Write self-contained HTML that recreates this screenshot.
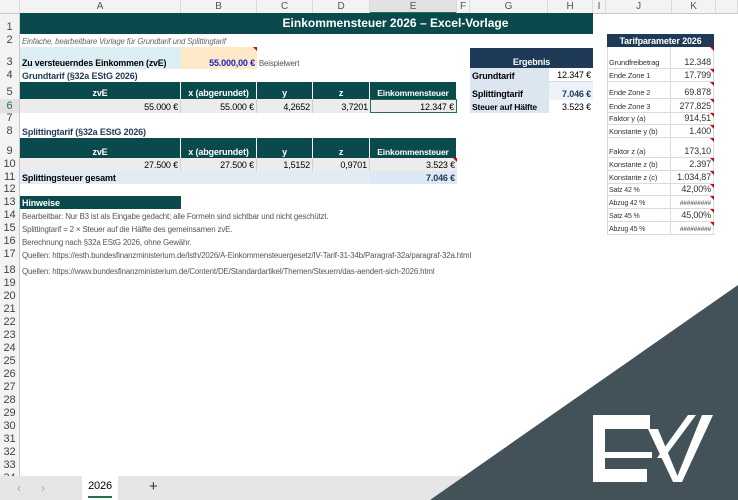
<!DOCTYPE html>
<html><head><meta charset="utf-8">
<style>
*{margin:0;padding:0;box-sizing:border-box}
body{width:738px;height:500px;overflow:hidden;background:#fff;font-family:"Liberation Sans",Arial,sans-serif;font-size:9px;color:#000;position:relative;letter-spacing:-0.15px}
.a{position:absolute;display:flex;align-items:flex-end;padding:0 2px 1px;white-space:nowrap;overflow:hidden}
.r{justify-content:flex-end}
.c{justify-content:center}
.hdr{position:absolute;top:0;height:14px;background:#f3f3f3;border-right:1px solid #dadada;border-bottom:1px solid #c8c8c8;color:#555;font-size:10px;text-align:center;line-height:14px}
.rn{position:absolute;left:0;width:20px;background:#f3f3f3;border-right:1px solid #c8c8c8;color:#444;font-size:11px;text-align:center;display:flex;align-items:flex-end;justify-content:center;line-height:13px}
.th{background:#0b4a4c;color:#fff;font-weight:bold;border-right:1px solid #fff}
.b{font-weight:bold}
.g{color:#555}
.n{color:#555;font-size:7.9px}
.tri{position:absolute;width:0;height:0;border-top:4px solid #d00;border-left:4px solid transparent}
.p{border-bottom:1px solid #d4dde6;border-right:1px solid #d4dde6;color:#333}
</style></head><body>
<div class="hdr" style="left:0;width:20px"></div>
<div class="hdr" style="left:20px;width:161px">A</div><div class="hdr" style="left:181px;width:76px">B</div><div class="hdr" style="left:257px;width:56px">C</div><div class="hdr" style="left:313px;width:57px">D</div><div class="hdr" style="left:370px;width:87px;background:#e2e2e2;border-bottom:2px solid #217346">E</div><div class="hdr" style="left:457px;width:13px">F</div><div class="hdr" style="left:470px;width:78px">G</div><div class="hdr" style="left:548px;width:45px">H</div><div class="hdr" style="left:593px;width:13px">I</div><div class="hdr" style="left:606px;width:66px">J</div><div class="hdr" style="left:672px;width:44px">K</div><div class="hdr" style="left:716px;width:22px"></div>
<div class="rn" style="top:14px;height:462px"></div>
<div class="rn" style="top:14px;height:20px">1</div><div class="rn" style="top:34px;height:13px">2</div><div class="rn" style="top:47px;height:22px">3</div><div class="rn" style="top:69px;height:13px">4</div><div class="rn" style="top:82px;height:17px">5</div><div class="rn" style="top:99px;height:14px;background:#e2e2e2;color:#217346">6</div><div class="rn" style="top:113px;height:12px">7</div><div class="rn" style="top:125px;height:13px">8</div><div class="rn" style="top:138px;height:20px">9</div><div class="rn" style="top:158px;height:13px">10</div><div class="rn" style="top:171px;height:13px">11</div><div class="rn" style="top:184px;height:12px">12</div><div class="rn" style="top:196px;height:13px">13</div><div class="rn" style="top:209px;height:13px">14</div><div class="rn" style="top:222px;height:13px">15</div><div class="rn" style="top:235px;height:13px">16</div><div class="rn" style="top:248px;height:13px">17</div><div class="rn" style="top:261px;height:16px">18</div><div class="rn" style="top:277px;height:13px">19</div><div class="rn" style="top:290px;height:13px">20</div><div class="rn" style="top:303px;height:13px">21</div><div class="rn" style="top:316px;height:13px">22</div><div class="rn" style="top:329px;height:13px">23</div><div class="rn" style="top:342px;height:13px">24</div><div class="rn" style="top:355px;height:13px">25</div><div class="rn" style="top:368px;height:13px">26</div><div class="rn" style="top:381px;height:13px">27</div><div class="rn" style="top:394px;height:13px">28</div><div class="rn" style="top:407px;height:13px">29</div><div class="rn" style="top:420px;height:13px">30</div><div class="rn" style="top:433px;height:13px">31</div><div class="rn" style="top:446px;height:13px">32</div><div class="rn" style="top:459px;height:13px">33</div><div class="rn" style="top:472px;height:13px">34</div>

<div class="a c" style="left:20px;top:13px;width:573px;height:21px;background:#0b4a4c;color:#fff;font-weight:bold;font-size:12px;align-items:center;padding-left:180px;letter-spacing:0">Einkommensteuer 2026 – Excel-Vorlage</div>
<div class="a" style="left:20px;top:34px;width:300px;height:13px;font-style:italic;color:#666;font-size:7.8px">Einfache, bearbeitbare Vorlage für Grundtarif und Splittingtarif</div>
<div class="a b" style="left:20px;top:47px;width:161px;height:22px;background:#daeef3;font-size:8.8px">Zu versteuerndes Einkommen (zvE)</div>
<div class="a r b" style="left:181px;top:47px;width:76px;height:22px;background:#fde9c8;color:#2020c0">55.000,00 €</div>
<div class="tri" style="left:253px;top:47px"></div>
<div class="a g" style="left:257px;top:47px;width:60px;height:22px;font-size:7.8px">Beispielwert</div>
<div class="a b" style="left:20px;top:69px;width:200px;height:13px;color:#1f3a56">Grundtarif (§32a EStG 2026)</div>
<div class="a c th" style="left:20px;top:82px;width:161px;height:17px">zvE</div>
<div class="a c th" style="left:181px;top:82px;width:76px;height:17px">x (abgerundet)</div>
<div class="a c th" style="left:257px;top:82px;width:56px;height:17px">y</div>
<div class="a c th" style="left:313px;top:82px;width:57px;height:17px">z</div>
<div class="a c th" style="left:370px;top:82px;width:87px;height:17px;font-size:8.5px">Einkommensteuer</div>
<div class="a r" style="left:20px;top:99px;width:161px;height:14px;background:#ececec;border-right:1px solid #d0d0d0">55.000 €</div>
<div class="a r" style="left:181px;top:99px;width:76px;height:14px;background:#ececec;border-right:1px solid #d0d0d0">55.000 €</div>
<div class="a r" style="left:257px;top:99px;width:56px;height:14px;background:#ececec;border-right:1px solid #d0d0d0">4,2652</div>
<div class="a r" style="left:313px;top:99px;width:57px;height:14px;background:#ececec">3,7201</div>
<div class="a r" style="left:370px;top:99px;width:87px;height:14px;background:#ececec;border:1px solid #217346;padding-bottom:0">12.347 €</div>
<div class="a b" style="left:20px;top:125px;width:200px;height:13px;color:#1f3a56">Splittingtarif (§32a EStG 2026)</div>
<div class="a c th" style="left:20px;top:138px;width:161px;height:20px">zvE</div>
<div class="a c th" style="left:181px;top:138px;width:76px;height:20px">x (abgerundet)</div>
<div class="a c th" style="left:257px;top:138px;width:56px;height:20px">y</div>
<div class="a c th" style="left:313px;top:138px;width:57px;height:20px">z</div>
<div class="a c th" style="left:370px;top:138px;width:87px;height:20px;font-size:8.5px">Einkommensteuer</div>
<div class="a r" style="left:20px;top:158px;width:161px;height:13px;background:#ececec;border-right:1px solid #d0d0d0">27.500 €</div>
<div class="a r" style="left:181px;top:158px;width:76px;height:13px;background:#ececec;border-right:1px solid #d0d0d0">27.500 €</div>
<div class="a r" style="left:257px;top:158px;width:56px;height:13px;background:#ececec;border-right:1px solid #d0d0d0">1,5152</div>
<div class="a r" style="left:313px;top:158px;width:57px;height:13px;background:#ececec;border-right:1px solid #d0d0d0">0,9701</div>
<div class="a r" style="left:370px;top:158px;width:87px;height:13px;background:#ececec">3.523 €</div>
<div class="tri" style="left:453px;top:158px"></div>
<div class="a b" style="left:20px;top:171px;width:350px;height:13px;background:#e3ebf3">Splittingsteuer gesamt</div>
<div class="a r b" style="left:370px;top:171px;width:87px;height:13px;background:#dce8f4;color:#1f3a56">7.046 €</div>
<div class="a b" style="left:20px;top:196px;width:161px;height:13px;background:#0b4a4c;color:#fff">Hinweise</div>
<div class="a n" style="left:20px;top:209px;width:460px;height:13px">Bearbeitbar: Nur B3 ist als Eingabe gedacht; alle Formeln sind sichtbar und nicht geschützt.</div>
<div class="a n" style="left:20px;top:222px;width:460px;height:13px">Splittingtarif = 2 × Steuer auf die Hälfte des gemeinsamen zvE.</div>
<div class="a n" style="left:20px;top:235px;width:460px;height:13px">Berechnung nach §32a EStG 2026, ohne Gewähr.</div>
<div class="a n" style="left:20px;top:248px;width:520px;height:13px">Quellen: https://esth.bundesfinanzministerium.de/lsth/2026/A-Einkommensteuergesetz/IV-Tarif-31-34b/Paragraf-32a/paragraf-32a.html</div>
<div class="a n" style="left:20px;top:261px;width:520px;height:16px">Quellen: https://www.bundesfinanzministerium.de/Content/DE/Standardartikel/Themen/Steuern/das-aendert-sich-2026.html</div>
<div class="a c b" style="left:470px;top:48px;width:123px;height:20px;background:#1f3a56;color:#fff">Ergebnis</div>
<div class="a b" style="left:470px;top:68px;width:79px;height:14px;background:#dce6f1">Grundtarif</div>
<div class="a r" style="left:549px;top:68px;width:44px;height:14px;border-bottom:1px solid #d4dde6">12.347 €</div>
<div class="a b" style="left:470px;top:82px;width:79px;height:18px;background:#dce6f1">Splittingtarif</div>
<div class="a r b" style="left:549px;top:82px;width:44px;height:18px;background:#eef3f9;color:#1f3a56">7.046 €</div>
<div class="a b" style="left:470px;top:100px;width:79px;height:13px;background:#dce6f1;font-size:8.5px">Steuer auf Hälfte</div>
<div class="a r" style="left:549px;top:100px;width:44px;height:13px">3.523 €</div>
<div class="a c b" style="left:607px;top:34px;width:107px;height:13px;background:#1f3a56;color:#fff">Tarifparameter 2026</div>
<div style="position:absolute;left:607px;top:47px;width:107px;height:188px;border-left:1px solid #d4dde6"></div>
<div class="a p" style="left:607px;top:47px;width:64px;height:22px;font-size:7.5px">Grundfreibetrag</div><div class="a r p g" style="left:671px;top:47px;width:43px;height:22px">12.348</div>
<div class="a p" style="left:607px;top:69px;width:64px;height:13px;font-size:7.5px">Ende Zone 1</div><div class="a r p g" style="left:671px;top:69px;width:43px;height:13px">17.799</div>
<div class="a p" style="left:607px;top:82px;width:64px;height:17px;font-size:7.5px">Ende Zone 2</div><div class="a r p g" style="left:671px;top:82px;width:43px;height:17px">69.878</div>
<div class="a p" style="left:607px;top:99px;width:64px;height:14px;font-size:7.5px">Ende Zone 3</div><div class="a r p g" style="left:671px;top:99px;width:43px;height:14px">277.825</div>
<div class="a p" style="left:607px;top:113px;width:64px;height:12px;font-size:7.5px">Faktor y (a)</div><div class="a r p g" style="left:671px;top:113px;width:43px;height:12px">914,51</div>
<div class="a p" style="left:607px;top:125px;width:64px;height:13px;font-size:7.5px">Konstante y (b)</div><div class="a r p g" style="left:671px;top:125px;width:43px;height:13px">1.400</div>
<div class="a p" style="left:607px;top:138px;width:64px;height:20px;font-size:7.5px">Faktor z (a)</div><div class="a r p g" style="left:671px;top:138px;width:43px;height:20px">173,10</div>
<div class="a p" style="left:607px;top:158px;width:64px;height:13px;font-size:7.5px">Konstante z (b)</div><div class="a r p g" style="left:671px;top:158px;width:43px;height:13px">2.397</div>
<div class="a p" style="left:607px;top:171px;width:64px;height:13px;font-size:7.5px">Konstante z (c)</div><div class="a r p g" style="left:671px;top:171px;width:43px;height:13px">1.034,87</div>
<div class="a p" style="left:607px;top:184px;width:64px;height:12px;font-size:7px">Satz 42 %</div><div class="a r p g" style="left:671px;top:184px;width:43px;height:12px">42,00%</div>
<div class="a p" style="left:607px;top:196px;width:64px;height:13px;font-size:7px">Abzug 42 %</div><div class="a r p g" style="left:671px;top:196px;width:43px;height:13px;font-size:6.5px">#########</div>
<div class="a p" style="left:607px;top:209px;width:64px;height:13px;font-size:7px">Satz 45 %</div><div class="a r p g" style="left:671px;top:209px;width:43px;height:13px">45,00%</div>
<div class="a p" style="left:607px;top:222px;width:64px;height:13px;font-size:7px">Abzug 45 %</div><div class="a r p g" style="left:671px;top:222px;width:43px;height:13px;font-size:6.5px">#########</div>
<div class="tri" style="left:710px;top:47px"></div><div class="tri" style="left:710px;top:69px"></div><div class="tri" style="left:710px;top:82px"></div><div class="tri" style="left:710px;top:99px"></div><div class="tri" style="left:710px;top:113px"></div><div class="tri" style="left:710px;top:125px"></div><div class="tri" style="left:710px;top:138px"></div><div class="tri" style="left:710px;top:158px"></div><div class="tri" style="left:710px;top:171px"></div><div class="tri" style="left:710px;top:184px"></div><div class="tri" style="left:710px;top:196px"></div><div class="tri" style="left:710px;top:209px"></div><div class="tri" style="left:710px;top:222px"></div>
<div style="position:absolute;left:0;top:476px;width:738px;height:24px;background:#e6e6e6"></div>
<div style="position:absolute;left:17px;top:481px;color:#aaa;font-size:12px">&#8249;</div>
<div style="position:absolute;left:41px;top:481px;color:#aaa;font-size:12px">&#8250;</div>
<div style="position:absolute;left:82px;top:476px;width:36px;height:24px;background:#fff;text-align:center;font-size:11px;line-height:20px">2026<div style="position:absolute;left:6px;right:6px;bottom:2px;height:2px;background:#217346"></div></div>
<div style="position:absolute;left:149px;top:478px;font-size:15px;color:#333">+</div>
<svg style="position:absolute;left:0;top:0" width="738" height="500" viewBox="0 0 738 500">
<polygon points="738,285 738,500 430,500" fill="#435259"/>
<polygon points="593,415 650,415 650,429 605,429 605,452 652,452 652,458 605,458 605,469 647,469 647,482 593,482" fill="#fff"/>
<polygon points="648,429 658,429 680,482 673,482" fill="#fff"/>
<polygon points="702,415 713,415 682,482 675,482" fill="#fff"/>
<polygon points="688,415 696,415 664,458 657,458" fill="#fff"/>
</svg>
</body></html>
